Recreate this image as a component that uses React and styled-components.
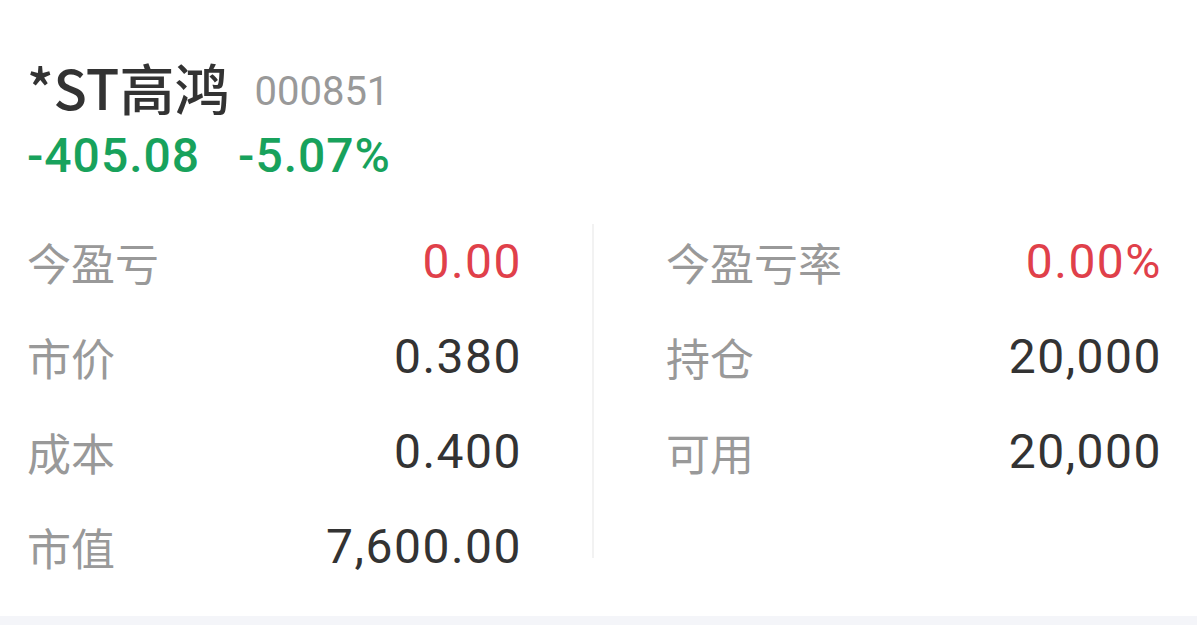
import React from "react";
import styled, { createGlobalStyle } from "styled-components";

const Global = createGlobalStyle`
  html, body { margin: 0; padding: 0; background: #fff; }
  body { width: 1197px; height: 625px; overflow: hidden; }
`;

const Page = styled.div`
  width: 1197px;
  height: 625px;
  display: flex;
  flex-direction: column;
  background: #fff;
`;

const Card = styled.div`
  flex: 1;
  padding: 56px 37px 0 27px;
  display: flex;
  flex-direction: column;
`;

const TitleRow = styled.div`
  display: flex;
  align-items: center;
  height: 60px;
`;

const Name = styled.span`
  font-family: "Noto Sans CJK SC", "Noto Sans", sans-serif;
  font-size: 55px;
  line-height: 60px;
  color: #333;
  font-weight: 500;
`;

const Code = styled.span`
  font-family: Roboto, "Noto Sans", sans-serif;
  font-size: 40px;
  color: #999;
  margin-left: 25px;
  margin-top: 12px;
  line-height: 40px;
`;

const ChangeRow = styled.div`
  display: flex;
  gap: 38px;
  margin-top: 12px;
  height: 56px;
  align-items: center;
`;

const Change = styled.span`
  font-family: Roboto, "Noto Sans", sans-serif;
  font-size: 48px;
  font-weight: 500;
  letter-spacing: 1px;
  color: #18a25c;
  line-height: 56px;
`;

const Grid = styled.div`
  display: flex;
  margin-top: 30px;
`;

const Column = styled.div`
  display: flex;
  flex-direction: column;
  width: ${(p) => p.$w}px;
  ${(p) => (p.$left ? "padding-right: 72px;" : "padding-left: 72px;")}
`;

const Divider = styled.div`
  width: 2px;
  height: 334px;
  margin-top: 10px;
  background: #f2f2f2;
  align-self: flex-start;
`;

const Row = styled.div`
  height: 95px;
  display: flex;
  align-items: center;
  justify-content: space-between;
`;

const Label = styled.span`
  font-family: "Noto Sans CJK SC", "Noto Sans", sans-serif;
  font-size: 44px;
  color: #999;
  line-height: 1;
`;

const Value = styled.span`
  font-family: Roboto, "Noto Sans", sans-serif;
  font-size: 48px;
  font-weight: 400;
  letter-spacing: 1.5px;
  margin-right: -2px;
  line-height: 1;
  color: ${(p) => (p.$red ? "#e0404a" : "#333")};
`;

const Footer = styled.div`
  height: 9px;
  background: #f4f5f9;
`;

const left = [
  ["今盈亏", "0.00", true],
  ["市价", "0.380"],
  ["成本", "0.400"],
  ["市值", "7,600.00"],
];
const right = [
  ["今盈亏率", "0.00%", true],
  ["持仓", "20,000"],
  ["可用", "20,000"],
];

export default function App() {
  return (
    <Page>
      <Global />
      <Card>
        <TitleRow>
          <Name>*ST高鸿</Name>
          <Code>000851</Code>
        </TitleRow>
        <ChangeRow>
          <Change>-405.08</Change>
          <Change>-5.07%</Change>
        </ChangeRow>
        <Grid>
          <Column $left $w={493}>
            {left.map(([l, v, r]) => (
              <Row key={l}>
                <Label>{l}</Label>
                <Value $red={r}>{v}</Value>
              </Row>
            ))}
          </Column>
          <Divider />
          <Column $w={494}>
            {right.map(([l, v, r]) => (
              <Row key={l}>
                <Label>{l}</Label>
                <Value $red={r}>{v}</Value>
              </Row>
            ))}
          </Column>
        </Grid>
      </Card>
      <Footer />
    </Page>
  );
}
